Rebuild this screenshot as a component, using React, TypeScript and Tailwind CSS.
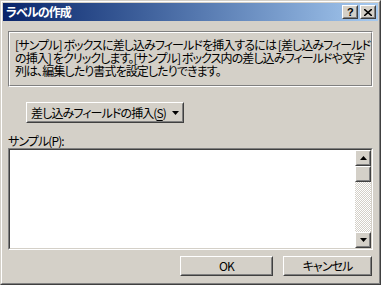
import React from "react";

const face = "bg-[#d4d0c8]";
const font = "font-['MS_UI_Gothic','Noto_Sans_CJK_JP',sans-serif] [font-feature-settings:'palt'] tracking-[-0.9px]";

function Raised({ className = "", children }: { className?: string; children?: React.ReactNode }) {
  return (
    <div className={`border border-t-white border-l-white border-r-[#404040] border-b-[#404040] ${face} ${className}`}>
      <div className="flex h-full w-full items-center justify-center border border-t-[#d4d0c8] border-l-[#d4d0c8] border-r-[#808080] border-b-[#808080]">
        {children}
      </div>
    </div>
  );
}

function Arrow({ up }: { up?: boolean }) {
  return (
    <svg width="7" height="4" viewBox="0 0 7 4">
      {up ? <path d="M3.5 0 L7 4 L0 4 Z" fill="#000" /> : <path d="M0 0 L7 0 L3.5 4 Z" fill="#000" />}
    </svg>
  );
}

export default function App() {
  return (
    <div className={`h-[285px] w-[381px] border border-t-[#d4d0c8] border-l-[#d4d0c8] border-r-[#404040] border-b-[#404040] ${font}`}>
      <div className={`flex h-full flex-col border border-t-white border-l-white border-r-[#808080] border-b-[#808080] p-px ${face}`}>
        {/* title bar */}
        <div className="flex h-[18px] items-center bg-gradient-to-r from-[#0a246a] to-[#a6caf0] pl-[3px] pr-[2px]">
          <span className="flex-1 text-[12px] font-bold leading-none text-white">ラベルの作成</span>
          <Raised className="h-[14px] w-[16px]">
            <span className="font-['Liberation_Sans',sans-serif] text-[11px] font-bold leading-none text-black">?</span>
          </Raised>
          <Raised className="ml-[2px] h-[14px] w-[16px]">
            <svg width="8" height="7" viewBox="0 0 8 7">
              <path d="M0 0 L8 7 M8 0 L0 7" stroke="#000" strokeWidth="1.6" />
            </svg>
          </Raised>
        </div>

        {/* body */}
        <div className="flex flex-1 flex-col px-[5px] pt-[10px] text-[12px] leading-[12px] text-black">
          <div className="border border-t-[#808080] border-l-[#808080] border-r-white border-b-white">
            <div className="border border-t-white border-l-white border-r-[#808080] border-b-[#808080] px-[5px] pb-[8px] pt-[5px] leading-[13px]">
              <div className="whitespace-nowrap">[サンプル] ボックスに差し込みフィールドを挿入するには [差し込みフィールド</div>
              <div className="whitespace-nowrap">の挿入] をクリックします。[サンプル] ボックス内の差し込みフィールドや文字</div>
              <div className="whitespace-nowrap">列は、編集したり書式を設定したりできます。</div>
            </div>
          </div>

          <div className="mt-[15px] pl-[18px]">
            <Raised className="h-[21px] w-[158px]">
              <span className="whitespace-nowrap">
                差し込みフィールドの挿入(<span className="underline underline-offset-2">S</span>)
              </span>
              <span className="ml-[6px]">
                <Arrow />
              </span>
            </Raised>
          </div>

          <div className="mt-[12px] whitespace-nowrap">
            サンプル(<span className="underline underline-offset-2">P</span>):
          </div>

          <div className="mt-[1px] h-[102px] border border-t-[#808080] border-l-[#808080] border-r-white border-b-white">
            <div className="flex h-full border border-t-[#404040] border-l-[#404040] border-r-[#d4d0c8] border-b-[#d4d0c8] bg-white">
              <div className="flex-1" />
              <div className="flex w-[16px] flex-col bg-[repeating-conic-gradient(#ffffff_0_25%,#d4d0c8_0_50%)] bg-[length:2px_2px]">
                <Raised className="h-[16px] w-[16px]">
                  <Arrow up />
                </Raised>
                <Raised className="h-[16px] w-[16px]" />
                <div className="flex-1" />
                <Raised className="h-[16px] w-[16px]">
                  <Arrow />
                </Raised>
              </div>
            </div>
          </div>

          <div className="mt-[6px] flex justify-end gap-[10px] pr-px">
            <Raised className="h-[20px] w-[93px]">OK</Raised>
            <Raised className="h-[20px] w-[89px]">キャンセル</Raised>
          </div>
        </div>
      </div>
    </div>
  );
}
